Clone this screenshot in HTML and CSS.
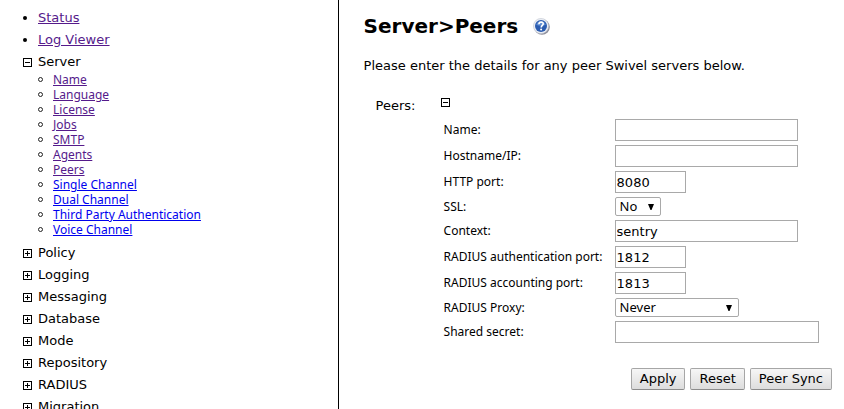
FILE: index.html
```
<!DOCTYPE html>
<html lang="en">
<head>
  <meta charset="UTF-8">
  <meta name="viewport" content="width=device-width, initial-scale=1">
  <title>Server &gt; Peers</title>
  <link rel="stylesheet" href="styles.css">
</head>
<body>
  <div class="layout">
    <nav class="sidebar">
      <ul class="menu">
        <li class="menu-item"><span class="bullet"></span><a href="#status" class="visited">Status</a></li>
        <li class="menu-item"><span class="bullet"></span><a href="#logs" class="visited">Log Viewer</a></li>
        <li class="menu-item"><button type="button" class="toggle open" aria-label="Collapse Server"></button>Server</li>
        <li>
          <ul class="submenu">
            <li><a href="#name" class="visited">Name</a></li>
            <li><a href="#language" class="visited">Language</a></li>
            <li><a href="#license" class="visited">License</a></li>
            <li><a href="#jobs" class="visited">Jobs</a></li>
            <li><a href="#smtp" class="visited">SMTP</a></li>
            <li><a href="#agents" class="visited">Agents</a></li>
            <li><a href="#peers" class="visited">Peers</a></li>
            <li><a href="#single">Single Channel</a></li>
            <li><a href="#dual">Dual Channel</a></li>
            <li><a href="#third-party">Third Party Authentication</a></li>
            <li><a href="#voice">Voice Channel</a></li>
          </ul>
        </li>
        <li class="menu-item"><button type="button" class="toggle" aria-label="Expand Policy"></button>Policy</li>
        <li class="menu-item"><button type="button" class="toggle" aria-label="Expand Logging"></button>Logging</li>
        <li class="menu-item"><button type="button" class="toggle" aria-label="Expand Messaging"></button>Messaging</li>
        <li class="menu-item"><button type="button" class="toggle" aria-label="Expand Database"></button>Database</li>
        <li class="menu-item"><button type="button" class="toggle" aria-label="Expand Mode"></button>Mode</li>
        <li class="menu-item"><button type="button" class="toggle" aria-label="Expand Repository"></button>Repository</li>
        <li class="menu-item"><button type="button" class="toggle" aria-label="Expand RADIUS"></button>RADIUS</li>
        <li class="menu-item"><button type="button" class="toggle" aria-label="Expand Migration"></button>Migration</li>
      </ul>
    </nav>

    <main class="content">
      <header class="title">
        <h1>Server&gt;Peers</h1>
        <a href="#help" class="help" aria-label="Help">
          <svg width="17" height="17" viewBox="0 0 17 17">
            <circle cx="9" cy="9" r="7.8" fill="#8d8d99"/>
            <circle cx="8" cy="8" r="7.6" fill="#e9edf4" stroke="#c3c8d2" stroke-width=".6"/>
            <circle cx="8" cy="8" r="6" fill="#2b5cb0"/>
            <path d="M3.3 7a4.8 4.8 0 0 1 9.4 0c-3 .2-5 1.500-9.400 0z" fill="#5d8cd2"/>
            <path d="M5.900 6.300c.1-3 4.700-2.800 4.300-.2-.2 1.300-2 1.500-2 3.300" fill="none" stroke="#fff" stroke-width="1.600"/>
            <circle cx="8.100" cy="11.500" r="1" fill="#fff"/>
          </svg>
        </a>
      </header>
      <p class="intro">Please enter the details for any peer Swivel servers below.</p>

      <form class="peers">
        <div class="group">
          <span class="group-name">Peers:</span>
          <div class="group-body">
            <button type="button" class="toggle open" aria-label="Collapse peer"></button>
            <div class="fields">
              <label for="name">Name:</label>
              <input type="text" id="name" class="medium">
              <label for="host">Hostname/IP:</label>
              <input type="text" id="host" class="medium">
              <label for="http">HTTP port:</label>
              <input type="text" id="http" class="short" value="8080">
              <label for="ssl">SSL:</label>
              <select id="ssl" class="yesno">
                <option>No</option>
                <option>Yes</option>
              </select>
              <label for="context">Context:</label>
              <input type="text" id="context" class="medium" value="sentry">
              <label for="auth">RADIUS authentication port:</label>
              <input type="text" id="auth" class="short" value="1812">
              <label for="acct">RADIUS accounting port:</label>
              <input type="text" id="acct" class="short" value="1813">
              <label for="proxy">RADIUS Proxy:</label>
              <select id="proxy" class="proxy">
                <option>Never</option>
              </select>
              <label for="secret">Shared secret:</label>
              <input type="password" id="secret" class="long">
            </div>
          </div>
        </div>
        <div class="actions">
          <button type="submit" class="btn">Apply</button>
          <button type="reset" class="btn">Reset</button>
          <button type="button" class="btn">Peer Sync</button>
        </div>
      </form>
    </main>
  </div>
</body>
</html>
```
FILE: styles.css
```
*,
*::before {
  box-sizing: border-box;
  margin: 0;
  padding: 0;
}

body {
  font-family: Verdana, "DejaVu Sans", sans-serif;
  font-size: 13px;
  line-height: 16px;
  background: #fff;
  color: #000;
}

.layout {
  display: grid;
  grid-template-columns: 2fr 3fr;
  height: 100vh;
  overflow: hidden;
}

ul {
  list-style: none;
}

a {
  color: #0000ee;
}

a.visited {
  color: #551a8b;
}

/* Navigation tree */
.menu {
  padding: 7px 0 0 23px;
}

.menu-item {
  display: flex;
  align-items: center;
  gap: 6px;
  height: 22px;
}

.bullet {
  width: 4px;
  height: 4px;
  margin-right: 5px;
  border-radius: 50%;
  background: #000;
}

.toggle {
  width: 9px;
  height: 9px;
  border: 1px solid #000;
  background:
    linear-gradient(#000, #000) center / 5px 1px no-repeat,
    linear-gradient(#000, #000) center / 1px 5px no-repeat,
    #fff;
  cursor: pointer;
}

.toggle.open {
  background: linear-gradient(#000, #000) center / 5px 1px no-repeat, #fff;
}

.submenu {
  margin-top: -1px;
  padding-bottom: 5px;
  font-family: Tahoma, "Noto Sans", sans-serif;
  font-size: 12px;
  line-height: 15px;
}

.submenu li {
  display: flex;
  align-items: center;
  gap: 10px;
  padding-left: 15px;
}

.submenu li::before {
  content: "";
  width: 5px;
  height: 5px;
  border: 1px solid #222;
  border-radius: 50%;
}

/* Content */
.content {
  padding: 14px 12px 0 25px;
  border-left: 1px solid #000;
}

.title {
  display: flex;
  align-items: center;
  gap: 15px;
}

h1 {
  font-size: 20px;
  line-height: 24px;
}

.help {
  display: flex;
}

.intro {
  margin-top: 20px;
}

.group {
  display: flex;
  padding: 24px 0 0 12px;
}

.group-name {
  width: 65px;
}

.group-body .toggle {
  display: block;
}

.fields {
  display: grid;
  grid-template-columns: 167px auto;
  gap: 4px;
  align-items: center;
  justify-items: start;
  margin: 12px 0 0 3px;
}

.fields label {
  font-family: Tahoma, "Noto Sans", sans-serif;
  font-size: 12px;
  white-space: nowrap;
}

input {
  height: 22px;
  padding: 0 1px;
  border: 1px solid #a9a9a9;
  background: #fff;
  font: inherit;
}

.short {
  width: 71px;
}

.medium {
  width: 183px;
}

.long {
  width: 204px;
}

select {
  appearance: none;
  height: 19px;
  padding: 0 4px;
  border: 1px solid #a9a9a9;
  border-radius: 2px;
  background: url("data:image/svg+xml,%3Csvg xmlns='http://www.w3.org/2000/svg' width='6' height='6'%3E%3Cpath d='M0 0h6L3.500 6h-1z'/%3E%3C/svg%3E") right 6px center no-repeat #fff;
  color: #000;
  font-family: "Noto Sans", sans-serif;
  font-size: 13px;
  line-height: 17px;
}

.yesno {
  width: 46px;
}

.proxy {
  width: 124px;
}

.actions {
  display: flex;
  justify-content: flex-end;
  gap: 5px;
  margin-top: 25px;
}

.btn {
  height: 22px;
  padding: 0 8px;
  border: 1px solid #a6a6a6;
  border-bottom-color: #8c8c8c;
  border-radius: 2px;
  background: linear-gradient(#f6f6f6, #dddddd);
  color: #000;
  font: inherit;
  cursor: pointer;
}
```
